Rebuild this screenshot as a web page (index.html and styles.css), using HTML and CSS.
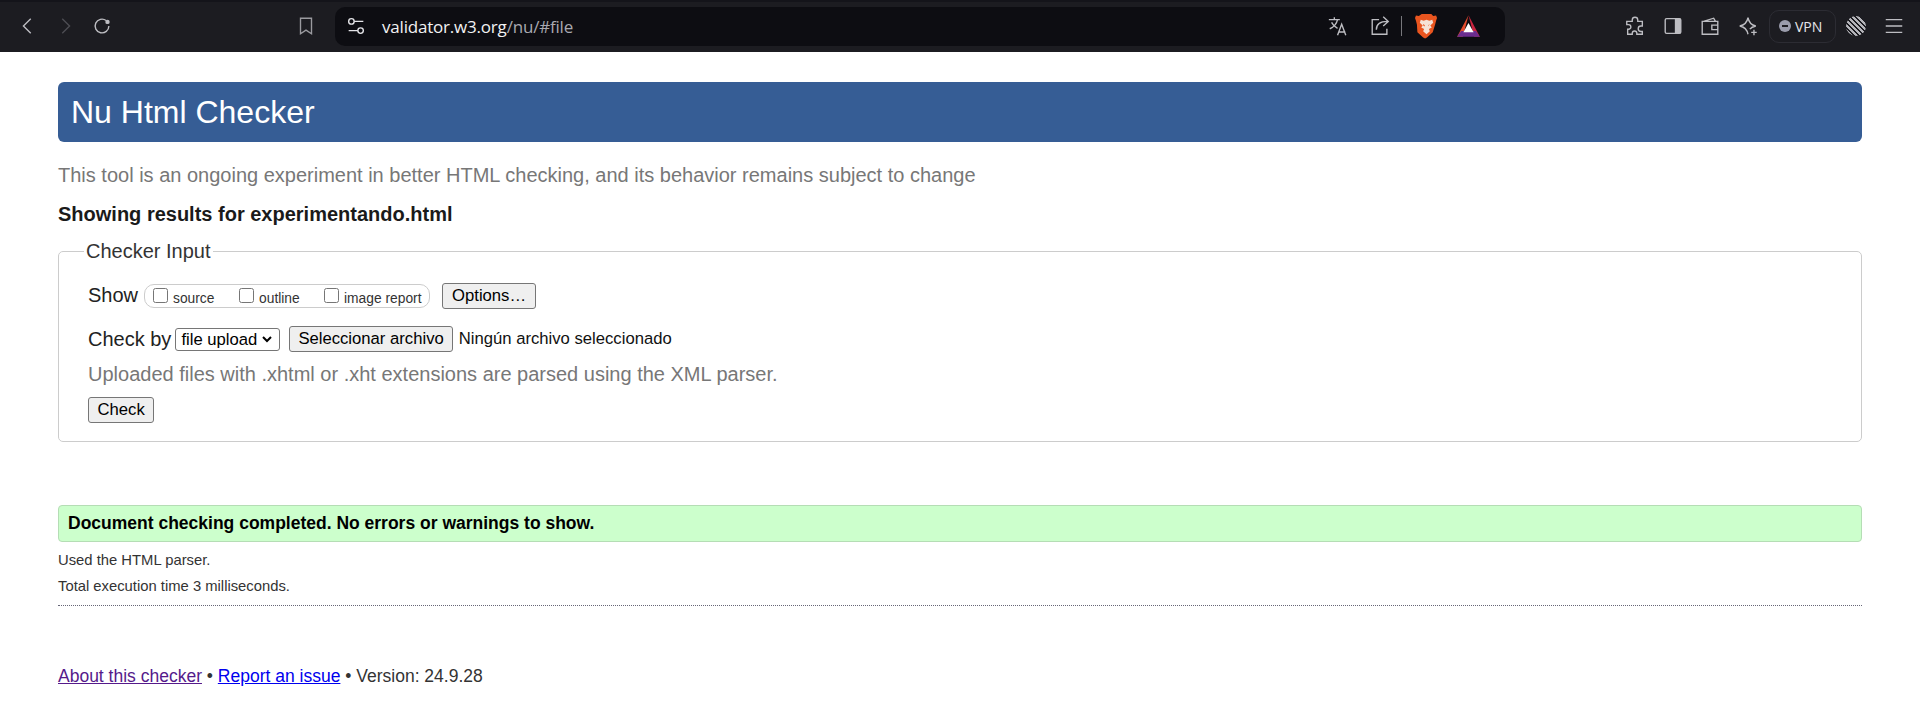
FILE: index.html
```html
<!DOCTYPE html>
<html lang="en">
<head>
  <meta charset="UTF-8">
  <title>Nu Html Checker</title>
  <link rel="stylesheet" href="styles.css">
</head>
<body>
  <div class="toolbar">
    <div class="nav-group">
      <svg class="icon" viewBox="0 0 24 24"><path d="M15 4 7 12l8 8"/></svg>
      <svg class="icon dim" viewBox="0 0 24 24"><path d="m9 4 8 8-8 8"/></svg>
      <svg class="icon" viewBox="0 0 24 24"><path d="M19.5 12a7.5 7.5 0 1 1-3-6"/><circle class="fill" cx="18" cy="7.5" r="2.4"/></svg>
    </div>
    <svg class="icon bookmark" viewBox="0 0 24 24"><path d="M6 3.500h12v17l-6-4-6 4z"/></svg>
    <div class="urlbar">
      <svg class="icon sliders" viewBox="0 0 24 24"><circle cx="7" cy="7" r="3"/><path d="M10 7h10M4 17h10"/><circle cx="17" cy="17" r="3"/></svg>
      <span class="url">validator.w3.org<span class="url-rest">/nu/#file</span></span>
      <div class="url-actions">
        <svg class="icon translate" viewBox="0 0 24 24"><path d="M2 5h12M8 2.500v2.500M11.500 5c-1 4.500-4 8-8.500 10M5 8c1.500 3 3.500 5 6.500 6.500M11.500 22l4.500-12 4.500 12M13 18.500h7"/></svg>
        <svg class="icon share" viewBox="0 0 24 24"><path d="M11 5H3.500v16h16v-6M8 16c0-6 4-9 12-9M15.500 2 21 7l-5.500 5"/></svg>
        <span class="divider"></span>
        <svg class="brave" viewBox="0 0 24 28"><path class="brave-body" d="M7 1h10l2 2 3-.5 1 2.500-1 3-1 4-2.500 8-6 5.500-2 1-2-1-6-5.500L2 12 1 8 0 5l1-2.500L4 3z"/><path class="brave-face" d="M12 7 9 8 6 7l-1 3 3 3-1.500 2 3 1.500L8.500 19l3.500 3 3.500-3-1-2.500 3-1.500L16 13l3-3-1-3-3 1zm-3.500 4.500 1.500 1 .5 1.500-2-1zm7 0-2 2.500.5-1.500z"/></svg>
        <svg class="triangle" viewBox="0 0 22 22"><path class="tri-orange" d="M11 1 1 20h5z"/><path class="tri-red" d="m11 1 10 19h-5z"/><path class="tri-purple" d="M1 20h20l-3.500-5h-13z"/><path class="tri-white" d="m11 8 4.500 8h-9z"/></svg>
      </div>
    </div>
    <div class="browser-actions">
      <svg class="icon" viewBox="0 0 24 24"><path d="M9 5.500a3 3 0 0 1 6 0V7h5v5h-1.500a3 3 0 0 0 0 6H20v3h-6v-1a2.500 2.500 0 0 0-5 0v1H4v-5.500h1a2.500 2.500 0 0 0 0-5H3V7h6z"/></svg>
      <svg class="icon" viewBox="0 0 24 24"><rect x="3.500" y="4" width="17" height="16" rx="1.500"/><path class="fill" d="M14 4h6.500v16H14z"/></svg>
      <svg class="icon" viewBox="0 0 24 24"><path d="M5 7 16 3.500 18 7M3.500 7h17v14h-17zM20.500 11H14v5h6.500"/></svg>
      <svg class="icon" viewBox="0 0 24 24"><path d="M12 3c1 5 3 8 8.500 9-3 .6-5 1.500-6.500 3.500M12 21c-1-5-3.500-8-9-9 5.500-1 8-4 9-9"/><path d="M18.500 16v6M15.500 19h6"/></svg>
      <div class="vpn"><span class="vpn-dot"></span>VPN</div>
      <div class="stripes"></div>
      <svg class="icon menu" viewBox="0 0 24 24"><path d="M3 5h18M3 12h18M3 19h18"/></svg>
    </div>
  </div>

  <main class="page">
    <h1 class="title">Nu Html Checker</h1>
    <p class="lead">This tool is an ongoing experiment in better HTML checking, and its behavior remains subject to change</p>
    <p class="showing">Showing results for experimentando.html</p>

    <fieldset class="input-box">
      <legend>Checker Input</legend>
      <div class="form-row show-row">
        <span class="row-label">Show</span>
        <div class="pill">
          <label class="opt opt-source"><input type="checkbox">source</label>
          <label class="opt opt-outline"><input type="checkbox">outline</label>
          <label class="opt"><input type="checkbox">image report</label>
        </div>
        <button class="btn options-btn" type="button">Options…</button>
      </div>
      <div class="form-row by-row">
        <span class="row-label">Check by</span>
        <select class="by-select"><option>file upload</option></select>
        <button class="btn file-btn" type="button">Seleccionar archivo</button>
        <span class="file-name">Ningún archivo seleccionado</span>
      </div>
      <p class="hint">Uploaded files with .xhtml or .xht extensions are parsed using the XML parser.</p>
      <button class="btn check-btn" type="button">Check</button>
    </fieldset>

    <div class="success">Document checking completed. No errors or warnings to show.</div>
    <p class="detail first">Used the HTML parser.</p>
    <p class="detail">Total execution time 3 milliseconds.</p>
    <hr class="rule">
    <p class="foot"><a class="visited" href="#">About this checker</a> • <a href="#">Report an issue</a> • Version: 24.9.28</p>
  </main>
</body>
</html>
```

FILE: styles.css
```css
html, body {
  height: 100%;
}
body {
  margin: 0;
  background: #fff;
  color: #222;
  font-family: "Liberation Sans", Arial, sans-serif;
  font-size: 20px;
  overflow: hidden;
}

/* browser chrome */
.toolbar {
  display: flex;
  align-items: center;
  height: 52px;
  padding-bottom: 2px;
  box-sizing: border-box;
  background: #1c1c21;
  border-top: 2px solid #14141a;
}
.icon {
  width: 22px;
  height: 22px;
  fill: none;
  stroke: #bdbdc2;
  stroke-width: 1.5;
  flex-shrink: 0;
}
.icon .fill {
  fill: #bdbdc2;
  stroke: none;
}
.icon.dim {
  stroke: #4d4d53;
}
.nav-group {
  display: flex;
  gap: 15px;
  padding-left: 17px;
}
.bookmark {
  margin-left: 182px;
  stroke: #9a9a9f;
}
.urlbar {
  display: flex;
  align-items: center;
  width: 1170px;
  height: 39px;
  margin-left: 18px;
  padding-left: 10px;
  box-sizing: border-box;
  background: #0d0d12;
  border-radius: 10px;
  font-family: "Open Sans", sans-serif;
}
.sliders {
  stroke: #e4e4e8;
}
.url {
  margin-left: 15px;
  color: #f2f2f2;
  font-size: 17px;
  letter-spacing: -0.2px;
}
.url-rest {
  color: #a9a9b0;
}
.url-actions {
  display: flex;
  align-items: center;
  margin-left: auto;
}
.share {
  margin-left: 20px;
}
.divider {
  width: 1px;
  height: 20px;
  margin-left: 10px;
  background: #77777c;
}
.brave {
  width: 23px;
  height: 27px;
  margin-left: 13px;
}
.brave-body {
  fill: #e9551f;
}
.brave-face {
  fill: #f6e3d6;
}
.triangle {
  width: 25px;
  height: 25px;
  margin-left: 18px;
  margin-right: 24px;
}
.tri-orange {
  fill: #e34b2c;
}
.tri-red {
  fill: #c9243f;
}
.tri-purple {
  fill: #6a2d8f;
}
.tri-white {
  fill: #fff;
}
.browser-actions {
  display: flex;
  align-items: center;
  margin-left: 119px;
}
.browser-actions .icon {
  margin-right: 15.5px;
}
.vpn {
  display: flex;
  align-items: center;
  width: 67px;
  height: 33px;
  margin: 0 10px 0 -5px;
  padding-left: 9px;
  box-sizing: border-box;
  border: 1px solid #2c2c33;
  border-radius: 10px;
  color: #e6e6ea;
  font-family: "Open Sans", sans-serif;
  font-size: 14px;
}
.vpn-dot {
  position: relative;
  width: 12px;
  height: 12px;
  margin-right: 4px;
  border-radius: 50%;
  background: #9a9cab;
}
.vpn-dot::after {
  content: "";
  position: absolute;
  left: 3px;
  top: 5px;
  width: 6px;
  height: 2px;
  background: #1c1c21;
}
.stripes {
  width: 20px;
  height: 20px;
  margin-right: 17px;
  border-radius: 50%;
  background: repeating-linear-gradient(45deg, #b4b4b9 0 2px, #1c1c21 2px 3.5px);
}
.browser-actions .menu {
  margin-right: 0;
}

/* page */
.page {
  padding: 30px 58px 0;
}
.title {
  margin: 0;
  height: 60px;
  padding-left: 13px;
  background: #365d95;
  border-radius: 6px;
  color: #fff;
  font-size: 32px;
  font-weight: 400;
  line-height: 61px;
}
.lead {
  margin: 20px 0 0;
  color: #777;
  line-height: 26px;
}
.showing {
  margin: 13px 0 0;
  color: #1a1a1a;
  font-weight: 700;
  line-height: 26px;
}
.input-box {
  height: 201px;
  margin: 14px 0 0;
  padding: 21px 29px 0;
  box-sizing: border-box;
  border: 1px solid #ccc;
  border-radius: 5px;
}
.input-box legend {
  margin-left: -4px;
  padding: 0 2px;
  color: #333;
  line-height: 20px;
}
.form-row {
  display: flex;
  align-items: center;
}
.show-row {
  height: 26px;
}
.by-row {
  height: 26px;
  margin-top: 18px;
}
.row-label {
  color: #222;
}
.pill {
  display: flex;
  align-items: center;
  width: 286px;
  height: 24px;
  margin: 2px 0 0 6px;
  padding-left: 8px;
  box-sizing: border-box;
  border: 1px solid #ccc;
  border-radius: 10px;
  font-size: 13.8px;
  color: #333;
}
.opt {
  display: flex;
  align-items: center;
  padding-top: 4px;
}
.opt input {
  width: 15px;
  height: 15px;
  margin: -6px 5px 0 0;
}
.opt-source {
  width: 86px;
}
.opt-outline {
  width: 85px;
}
.btn {
  height: 26px;
  padding: 0 9px;
  background: #efefef;
  border: 1px solid #767676;
  border-radius: 3px;
  color: #000;
  font-family: "Liberation Sans", Arial, sans-serif;
  font-size: 16.67px;
}
.options-btn {
  margin: 2px 0 0 12px;
}
.by-select {
  width: 105px;
  height: 23px;
  margin-left: 4px;
  padding: 0 0 0 5px;
  appearance: none;
  font-family: "Liberation Sans", Arial, sans-serif;
  font-size: 16.67px;
  background: #fff url("data:image/svg+xml,%3Csvg xmlns='http://www.w3.org/2000/svg' width='10' height='7'%3E%3Cpath d='M1 1l4 4 4-4' fill='none' stroke='%23000' stroke-width='2'/%3E%3C/svg%3E") no-repeat right 7px center;
  border: 1px solid #767676;
  border-radius: 3px;
}
.file-btn {
  margin-left: 9px;
  padding: 0 8px;
}
.check-btn {
  padding: 0 8.5px;
}
.file-name {
  margin-left: 6px;
  font-size: 16.67px;
  color: #111;
}
.hint {
  margin: 9px 0 10px;
  color: #777;
  line-height: 26px;
}
.success {
  height: 37px;
  margin-top: 63px;
  padding-left: 9px;
  box-sizing: border-box;
  background: #ccffcc;
  border: 1px solid #b5ddb5;
  border-radius: 4px;
  color: #000;
  font-size: 17.5px;
  font-weight: 700;
  line-height: 34px;
}
.detail {
  margin: 8px 0 0;
  font-size: 14.8px;
  line-height: 18px;
  color: #333;
}
.detail.first {
  margin-top: 9px;
}
.rule {
  height: 0;
  margin: 10px 0 0;
  border: 0;
  border-top: 1px dotted #667;
}
.foot {
  margin: 59px 0 0;
  font-size: 17.5px;
  line-height: 22px;
  color: #333;
}
.foot a {
  color: #0000ee;
}
.foot a.visited {
  color: #551a8b;
}
```
